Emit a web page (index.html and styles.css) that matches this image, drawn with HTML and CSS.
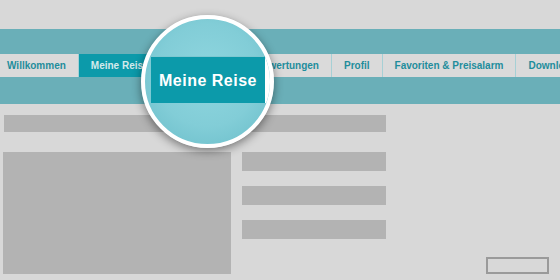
FILE: index.html
```html
<!DOCTYPE html>
<html lang="de">
<head>
    <meta charset="UTF-8">
    <meta name="viewport" content="width=device-width, initial-scale=1.0">
    <title>Meine Reise</title>
    <link rel="stylesheet" href="styles.css">
</head>
<body>
    <header class="band">
        <nav class="tabs">
            <a class="tab">Willkommen</a>
            <a class="tab active">Meine Reise</a>
            <a class="tab wide">Buchungen</a>
            <a class="tab">Bewertungen</a>
            <a class="tab">Profil</a>
            <a class="tab">Favoriten &amp; Preisalarm</a>
            <a class="tab">Downloads</a>
        </nav>
    </header>

    <main class="content">
        <div class="main">
            <div class="bar title"></div>
            <div class="row">
                <div class="block"></div>
                <div class="side">
                    <div class="bar"></div>
                    <div class="bar"></div>
                    <div class="bar"></div>
                </div>
            </div>
        </div>
        <div class="aside">
            <div class="button"></div>
        </div>
    </main>

    <!-- Lupe ueber dem aktiven Tab -->
    <div class="lens">
        <div class="lens-tab">Meine Reise</div>
        <div class="lens-edge"></div>
    </div>
</body>
</html>
```

FILE: styles.css
```css
body {
    margin: 0;
    background-color: #d8d8d8;
    font-family: "Liberation Sans", Arial, sans-serif;
    overflow: hidden;
}

.band {
    margin-top: 29px;
    height: 75px;
    padding-top: 25px;
    box-sizing: border-box;
    background-color: #6aafb8;
}

.tabs {
    display: flex;
    margin-left: -5px;
    white-space: nowrap;
}

.tab {
    flex: none;
    height: 23px;
    line-height: 23px;
    padding: 0 12px;
    background-color: #dadada;
    border-right: 1px solid #a6d0d5;
    color: #1f8d9c;
    font-size: 10px;
    font-weight: bold;
}

.tab.active {
    background-color: #0c9aaa;
    color: #d4eaec;
    border-right-color: #0c9aaa;
}

.tab.wide {
    padding: 0 13px;
}

.content {
    display: flex;
    padding: 11px 0 0 3px;
}

.main {
    width: 383px;
}

.bar {
    height: 19px;
    background-color: #b3b3b3;
}

.bar.title {
    height: 17px;
    margin-left: 1px;
}

.row {
    display: flex;
    gap: 11px;
    margin-top: 20px;
}

.block {
    width: 228px;
    height: 122px;
    background-color: #b3b3b3;
}

.side {
    display: flex;
    flex-direction: column;
    gap: 15px;
    width: 144px;
}

.aside {
    flex: 1;
    display: flex;
    align-items: flex-end;
}

.button {
    width: 63px;
    height: 17px;
    margin-left: 100px;
    box-sizing: border-box;
    border: 2px solid #9a9a9a;
}

.lens {
    position: absolute;
    left: 141px;
    top: 15px;
    width: 133px;
    height: 133px;
    box-sizing: border-box;
    border: 4px solid #fff;
    border-radius: 50%;
    overflow: hidden;
    background: radial-gradient(circle at 50% 45%, #8fd6df 0%, #82cdd7 55%, #68bcc8 100%);
    box-shadow: 0 3px 10px rgba(0, 0, 0, 0.45);
}

.lens-tab {
    position: absolute;
    left: 6px;
    top: 37px;
    width: 114px;
    height: 47px;
    line-height: 47px;
    background-color: #0c9aaa;
    border-top: 1px solid #7ec8d1;
    box-sizing: border-box;
    color: #fff;
    font-size: 16px;
    font-weight: bold;
    letter-spacing: 0.5px;
    text-align: center;
}

.lens-edge {
    position: absolute;
    left: 120px;
    top: 37px;
    width: 20px;
    height: 47px;
    background-color: #fff;
}
```
